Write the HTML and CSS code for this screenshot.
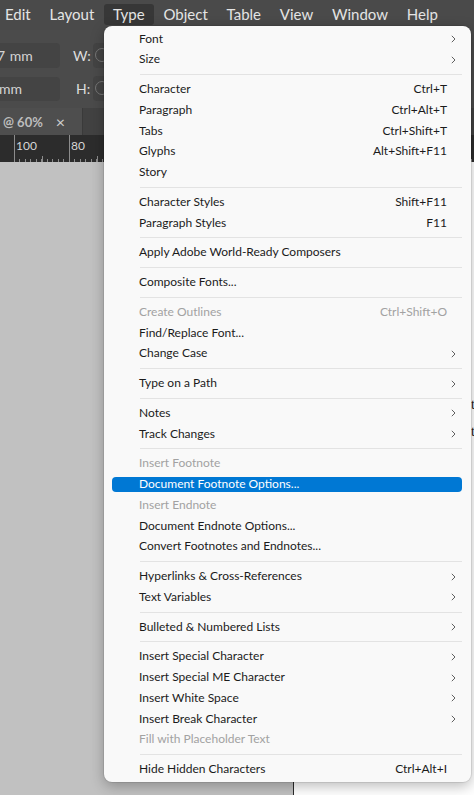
FILE: index.html
```html
<!DOCTYPE html>
<html>
<head>
<meta charset="utf-8">
<link rel="stylesheet" href="styles.css">
</head>
<body>
<div class="app">
  <div class="menubar">
    <span class="mi first">Edit</span>
    <span class="mi">Layout</span>
    <span class="mi open">Type</span>
    <span class="mi">Object</span>
    <span class="mi">Table</span>
    <span class="mi">View</span>
    <span class="mi">Window</span>
    <span class="mi">Help</span>
  </div>

  <div class="control">
    <div class="crow">
      <div class="field f1">7 mm</div>
      <span class="lbl">W:</span>
      <div class="stepper"><span class="knob"></span></div>
    </div>
    <div class="crow">
      <div class="field f2">mm</div>
      <span class="lbl lbl-h">H:</span>
      <div class="stepper"><span class="knob"></span></div>
    </div>
  </div>

  <div class="tabbar">
    <div class="doctab"><span class="zoomtxt">@ 60%</span><span class="close">×</span></div>
  </div>

  <div class="ruler">
    <span class="num">100</span><span class="num">80</span>
  </div>

  <div class="canvas">
    <div class="pasteboard"></div>
    <div class="page">
      <p class="ptext">t</p>
      <p class="ptext">t</p>
    </div>
  </div>

  <div class="menu">
    <div class="item sub">Font</div>
    <div class="item sub">Size</div>
    <div class="sep"></div>
    <div class="item"><span class="label">Character</span><span class="key">Ctrl+T</span></div>
    <div class="item"><span class="label">Paragraph</span><span class="key">Ctrl+Alt+T</span></div>
    <div class="item"><span class="label">Tabs</span><span class="key">Ctrl+Shift+T</span></div>
    <div class="item"><span class="label">Glyphs</span><span class="key">Alt+Shift+F11</span></div>
    <div class="item"><span class="label">Story</span></div>
    <div class="sep"></div>
    <div class="item"><span class="label">Character Styles</span><span class="key">Shift+F11</span></div>
    <div class="item"><span class="label">Paragraph Styles</span><span class="key">F11</span></div>
    <div class="sep"></div>
    <div class="item"><span class="label">Apply Adobe World-Ready Composers</span></div>
    <div class="sep"></div>
    <div class="item"><span class="label">Composite Fonts...</span></div>
    <div class="sep"></div>
    <div class="item disabled"><span class="label">Create Outlines</span><span class="key">Ctrl+Shift+O</span></div>
    <div class="item"><span class="label">Find/Replace Font...</span></div>
    <div class="item sub">Change Case</div>
    <div class="sep"></div>
    <div class="item sub">Type on a Path</div>
    <div class="sep"></div>
    <div class="item sub">Notes</div>
    <div class="item sub">Track Changes</div>
    <div class="sep"></div>
    <div class="item disabled"><span class="label">Insert Footnote</span></div>
    <div class="item active"><span class="label">Document Footnote Options...</span></div>
    <div class="item disabled"><span class="label">Insert Endnote</span></div>
    <div class="item"><span class="label">Document Endnote Options...</span></div>
    <div class="item"><span class="label">Convert Footnotes and Endnotes...</span></div>
    <div class="sep"></div>
    <div class="item sub">Hyperlinks &amp; Cross-References</div>
    <div class="item sub">Text Variables</div>
    <div class="sep"></div>
    <div class="item sub">Bulleted &amp; Numbered Lists</div>
    <div class="sep"></div>
    <div class="item sub">Insert Special Character</div>
    <div class="item sub">Insert Special ME Character</div>
    <div class="item sub">Insert White Space</div>
    <div class="item sub">Insert Break Character</div>
    <div class="item disabled"><span class="label">Fill with Placeholder Text</span></div>
    <div class="sep"></div>
    <div class="item"><span class="label">Hide Hidden Characters</span><span class="key">Ctrl+Alt+I</span></div>
  </div>
</div>
</body>
</html>
```

FILE: styles.css
```css
* { box-sizing: border-box; }
html, body { margin: 0; padding: 0; }
body {
  width: 474px;
  height: 795px;
  overflow: hidden;
  font-family: Lato, "Noto Sans", sans-serif;
  background: #c1c1c1;
}
.app {
  position: relative;
  width: 474px;
  height: 795px;
  display: flex;
  flex-direction: column;
  overflow: hidden;
}

/* ---------- menubar ---------- */
.menubar {
  height: 30px;
  flex: none;
  background: #4a4a4a;
  display: flex;
  align-items: flex-start;
  padding-top: 4px;
  color: #e4e4e4;
  font-size: 15px;
}
.mi {
  height: 21px;
  line-height: 21px;
  padding: 0 9.4px;
  border-radius: 3px;
  white-space: nowrap;
}
.mi.first { margin-left: -4.4px; }
.mi.open { background: #373737; }

/* ---------- control panel ---------- */
.control {
  height: 78px;
  flex: none;
  background: #4b4b4b;
  padding-top: 13px;
  display: flex;
  flex-direction: column;
  gap: 8px;
}
.crow {
  display: flex;
  align-items: center;
  height: 25px;
}
.field {
  height: 25px;
  line-height: 25px;
  width: 70px;
  margin-left: -10px;
  background: #444444;
  border-radius: 4px;
  color: #d4d4d4;
  font-size: 14px;
  white-space: nowrap;
  overflow: hidden;
}
.f1 { padding-left: 7px; word-spacing: 1px; }
.f2 { padding-left: 9px; height: 24px; line-height: 24px; }
.lbl {
  margin-left: 13px;
  width: 20px;
  color: #dedede;
  font-size: 14px;
}
.lbl-h { margin-left: 16px; width: 17px; }
.stepper {
  width: 30px;
  height: 25px;
  background: #444444;
  border-radius: 4px;
}
.knob {
  display: block;
  width: 14px;
  height: 14px;
  margin: 5px 0 0 2px;
  border: 1px solid #777;
  border-radius: 50%;
}

/* ---------- tab bar ---------- */
.tabbar {
  height: 27px;
  flex: none;
  background: #424242;
  display: flex;
}
.doctab {
  width: 83px;
  background: #4e4e4e;
  border-right: 1px solid #3a3a3a;
  display: flex;
  align-items: center;
  padding-left: 3px;
  gap: 13px;
  color: #bdbdbd;
  font-size: 13px;
  font-weight: 700;
}
.close { font-weight: 400; font-size: 16px; color: #cfcfcf; }

/* ---------- ruler ---------- */
.ruler {
  height: 27px;
  flex: none;
  background-color: #2c2c2c;
  background-image:
    repeating-linear-gradient(to right, #8c8c8c 0 1px, transparent 1px 55px),
    repeating-linear-gradient(to right, #8c8c8c 0 1px, transparent 1px 27.5px),
    repeating-linear-gradient(to right, #8c8c8c 0 1px, transparent 1px 5.5px);
  background-size: 100% 100%, 100% 6px, 100% 3px;
  background-position: 14px 0, 14px 100%, 14px 100%;
  background-repeat: no-repeat;
  display: flex;
  padding-left: 16px;
  padding-top: 4px;
  color: #d6d6d6;
  font-size: 12px;
  line-height: 14px;
}
.num { width: 55px; flex: none; }

/* ---------- canvas ---------- */
.canvas {
  flex: 1;
  display: flex;
  background: #c1c1c1;
}
.pasteboard { width: 293px; flex: none; }
.page {
  flex: 1;
  background: #ffffff;
  border-left: 1px solid #2a2a2a;
  padding: 235px 0 0 177px;
  overflow: hidden;
}
.ptext {
  margin: 0 0 11px;
  font-family: "Liberation Serif", serif;
  font-size: 14px;
  line-height: 16px;
  white-space: nowrap;
  color: #111;
}

/* ---------- dropdown menu ---------- */
.menu {
  position: absolute;
  left: 104px;
  top: 26px;
  width: 367px;
  height: 756px;
  background: #f9f9f9;
  border-radius: 8px;
  box-shadow: 0 4px 14px rgba(0,0,0,0.28), 0 0 0 1px rgba(0,0,0,0.08);
  padding: 2.7px 0 2px;
  display: flex;
  flex-direction: column;
  font-family: Lato, "Noto Sans", sans-serif;
  font-size: 12px;
  color: #1b1b1b;
}
.item {
  flex: none;
  height: 14.75px;
  line-height: 14.75px;
  margin: 3px 9px 3px 8px;
  padding: 0 15px 0 27px;
  border-radius: 4px;
  display: flex;
  align-items: center;
  white-space: nowrap;
}
.item .label { flex: 1; }
.item .key { color: #1b1b1b; }
.item.sub {
  background-image: url("data:image/svg+xml,%3Csvg xmlns='http://www.w3.org/2000/svg' width='5' height='8' viewBox='0 0 5 8'%3E%3Cpolyline points='0.8,0.8 4,4 0.8,7.2' fill='none' stroke='%23606060' stroke-width='1'/%3E%3C/svg%3E");
  background-repeat: no-repeat;
  background-position: right 6px center;
}
.item.disabled, .item.disabled .key { color: #a2a2a2; }
.item.active { background-color: #0078d4; color: #ffffff; }
.sep {
  flex: none;
  height: 1px;
  margin: 4px 9px 4px 36px;
  background: #e3e3e3;
}
```
